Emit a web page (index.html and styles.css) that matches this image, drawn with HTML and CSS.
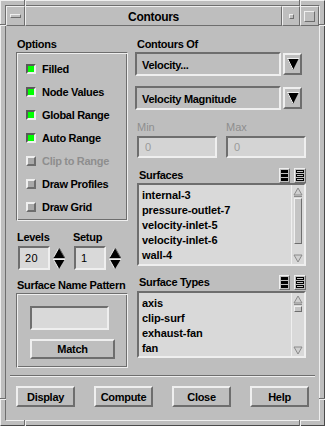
FILE: index.html
```html
<!DOCTYPE html>
<html>
<head>
<meta charset="utf-8">
<link rel="stylesheet" href="styles.css">
</head>
<body>
<div class="window">
  <span class="mark mv mtl"></span>
  <span class="mark mv mtr"></span>
  <span class="mark mv mbl"></span>
  <span class="mark mv mbr"></span>
  <span class="mark mh mlt"></span>
  <span class="mark mh mrt"></span>
  <span class="mark mh mlb"></span>
  <span class="mark mh mrb"></span>
  <div class="frame">
    <div class="titlebar">
      <div class="tbb tb-menu"><span class="menu-bar"></span></div>
      <div class="tbb title">Contours</div>
      <div class="tbb tb-min"><span class="min-sq"></span></div>
      <div class="tbb tb-max"><span class="max-sq"></span></div>
    </div>
    <div class="client">
      <div class="main">
        <div class="col-left">
          <div class="label">Options</div>
          <div class="group options">
            <div class="toggle"><span class="ind on"></span><span>Filled</span></div>
            <div class="toggle"><span class="ind on"></span><span>Node Values</span></div>
            <div class="toggle"><span class="ind on"></span><span>Global Range</span></div>
            <div class="toggle"><span class="ind on"></span><span>Auto Range</span></div>
            <div class="toggle disabled"><span class="ind"></span><span>Clip to Range</span></div>
            <div class="toggle"><span class="ind"></span><span>Draw Profiles</span></div>
            <div class="toggle"><span class="ind"></span><span>Draw Grid</span></div>
          </div>
          <div class="spinrow">
            <div class="spin spin-levels">
              <div class="label spin-label">Levels</div>
              <div class="spin-ctl">
                <div class="field spin-field">20</div>
                <div class="arrows">
                  <svg width="12" height="10" viewBox="0 0 12 10"><polygon points="6,0 12,10 0,10" fill="#000"/><line x1="5.5" y1="0.5" x2="0.5" y2="9.5" stroke="#efefef"/><line x1="6.5" y1="0.5" x2="11.5" y2="9.5" stroke="#606060"/></svg>
                  <svg width="12" height="10" viewBox="0 0 12 10"><polygon points="0,0 12,0 6,10" fill="#000"/><line x1="0" y1="0.5" x2="12" y2="0.5" stroke="#efefef"/><line x1="0.5" y1="0.5" x2="5.5" y2="9.5" stroke="#efefef"/></svg>
                </div>
              </div>
            </div>
            <div class="spin spin-setup">
              <div class="label spin-label">Setup</div>
              <div class="spin-ctl">
                <div class="field spin-field">1</div>
                <div class="arrows">
                  <svg width="12" height="10" viewBox="0 0 12 10"><polygon points="6,0 12,10 0,10" fill="#000"/><line x1="5.5" y1="0.5" x2="0.5" y2="9.5" stroke="#efefef"/><line x1="6.5" y1="0.5" x2="11.5" y2="9.5" stroke="#606060"/></svg>
                  <svg width="12" height="10" viewBox="0 0 12 10"><polygon points="0,0 12,0 6,10" fill="#000"/><line x1="0" y1="0.5" x2="12" y2="0.5" stroke="#efefef"/><line x1="0.5" y1="0.5" x2="5.5" y2="9.5" stroke="#efefef"/></svg>
                </div>
              </div>
            </div>
          </div>
          <div class="label snp-label">Surface Name Pattern</div>
          <div class="group pattern">
            <div class="field pattern-field"></div>
            <div class="btn match">Match</div>
          </div>
        </div>
        <div class="col-right">
          <div class="label rlabel">Contours Of</div>
          <div class="combo">
            <div class="combo-field">Velocity...</div>
            <div class="combo-btn"><svg width="12" height="12" viewBox="0 0 12 12"><polygon points="0,0 12,0 6,12" fill="#000"/><line x1="0" y1="0.5" x2="12" y2="0.5" stroke="#efefef"/><line x1="0.5" y1="0.5" x2="6" y2="11.5" stroke="#efefef"/></svg></div>
          </div>
          <div class="combo combo2">
            <div class="combo-field">Velocity Magnitude</div>
            <div class="combo-btn"><svg width="12" height="12" viewBox="0 0 12 12"><polygon points="0,0 12,0 6,12" fill="#000"/><line x1="0" y1="0.5" x2="12" y2="0.5" stroke="#efefef"/><line x1="0.5" y1="0.5" x2="6" y2="11.5" stroke="#efefef"/></svg></div>
          </div>
          <div class="minmax">
            <div class="mm-col">
              <div class="mm-label">Min</div>
              <div class="field mm-field">0</div>
            </div>
            <div class="mm-col">
              <div class="mm-label">Max</div>
              <div class="field mm-field">0</div>
            </div>
          </div>
          <div class="list-head">
            <span class="lh-label">Surfaces</span>
            <span class="selbtn"><svg width="7" height="11" viewBox="0 0 7 11"><rect x="0" y="0" width="7" height="3" fill="#000"/><rect x="0" y="4" width="7" height="3" fill="#000"/><rect x="0" y="8" width="7" height="3" fill="#000"/></svg></span>
            <span class="selbtn"><svg width="8" height="11" viewBox="0 0 8 11"><rect x="0.5" y="0.5" width="7" height="2" fill="none" stroke="#000"/><rect x="0.5" y="4.5" width="7" height="2" fill="none" stroke="#000"/><rect x="0.5" y="8.5" width="7" height="2" fill="none" stroke="#000"/></svg></span>
          </div>
          <div class="list list-surfaces">
            <div class="items">
              <div class="item">internal-3</div>
              <div class="item">pressure-outlet-7</div>
              <div class="item">velocity-inlet-5</div>
              <div class="item">velocity-inlet-6</div>
              <div class="item">wall-4</div>
            </div>
            <div class="sbar">
              <div class="sarrow"><svg width="10" height="10" viewBox="0 0 10 10"><polygon points="5,1 9,8 1,8" fill="#d0d0d0" stroke="#8a8a8a"/><line x1="1" y1="9.5" x2="9" y2="9.5" stroke="#8a8a8a"/></svg></div>
              <div class="trough"><div class="slider slider-big"></div></div>
              <div class="sarrow"><svg width="10" height="10" viewBox="0 0 10 10"><polygon points="1,2 9,2 5,9" fill="#d0d0d0" stroke="#8a8a8a"/></svg></div>
            </div>
          </div>
          <div class="list-head list-head2">
            <span class="lh-label">Surface Types</span>
            <span class="selbtn"><svg width="7" height="11" viewBox="0 0 7 11"><rect x="0" y="0" width="7" height="3" fill="#000"/><rect x="0" y="4" width="7" height="3" fill="#000"/><rect x="0" y="8" width="7" height="3" fill="#000"/></svg></span>
            <span class="selbtn"><svg width="8" height="11" viewBox="0 0 8 11"><rect x="0.5" y="0.5" width="7" height="2" fill="none" stroke="#000"/><rect x="0.5" y="4.5" width="7" height="2" fill="none" stroke="#000"/><rect x="0.5" y="8.5" width="7" height="2" fill="none" stroke="#000"/></svg></span>
          </div>
          <div class="list list-types">
            <div class="items">
              <div class="item">axis</div>
              <div class="item">clip-surf</div>
              <div class="item">exhaust-fan</div>
              <div class="item">fan</div>
            </div>
            <div class="sbar">
              <div class="sarrow"><svg width="10" height="10" viewBox="0 0 10 10"><polygon points="5,1 9,8 1,8" fill="#d0d0d0" stroke="#8a8a8a"/><line x1="1" y1="9.5" x2="9" y2="9.5" stroke="#8a8a8a"/></svg></div>
              <div class="trough"><div class="slider slider-small"></div></div>
              <div class="sarrow"><svg width="10" height="10" viewBox="0 0 10 10"><polygon points="1,2 9,2 5,9" fill="#d0d0d0" stroke="#8a8a8a"/></svg></div>
            </div>
          </div>
        </div>
      </div>
      <div class="sep"></div>
      <div class="buttons">
        <div class="btn act">Display</div>
        <div class="btn act">Compute</div>
        <div class="btn act">Close</div>
        <div class="btn act">Help</div>
      </div>
    </div>
  </div>
</div>
</body>
</html>
```

FILE: styles.css
```css
* { box-sizing: border-box; margin: 0; padding: 0; }
html, body { width: 325px; height: 426px; overflow: hidden; }
body {
  background: #bebebe;
  font-family: "Liberation Sans", Arial, sans-serif;
  font-size: 11px;
  font-weight: bold;
  letter-spacing: -0.3px;
  color: #000;
}
.window {
  position: relative;
  width: 325px;
  height: 426px;
  background: #bebebe;
  border: 1px solid;
  border-color: #efefef #4a4a4a #4a4a4a #efefef;
  padding: 4px;
}
.mark { position: absolute; }
.mv { width: 2px; height: 6px; border-left: 1px solid #6e6e6e; border-right: 1px solid #efefef; }
.mh { width: 6px; height: 2px; border-top: 1px solid #6e6e6e; border-bottom: 1px solid #efefef; }
.mtl { top: -1px; left: 23px; }
.mtr { top: -1px; left: 298px; }
.mbl { bottom: -1px; left: 23px; }
.mbr { bottom: -1px; left: 298px; }
.mlt { left: -1px; top: 23px; }
.mrt { right: -1px; top: 23px; }
.mlb { left: -1px; top: 397px; }
.mrb { right: -1px; top: 397px; }

.frame {
  width: 100%;
  height: 100%;
  border: 1px solid;
  border-color: #6e6e6e #efefef #efefef #6e6e6e;
  display: flex;
  flex-direction: column;
}
.titlebar { display: flex; height: 20px; flex: none; }
.tbb {
  border: 1px solid;
  border-color: #efefef #6e6e6e #6e6e6e #efefef;
  display: flex;
  align-items: center;
  justify-content: center;
}
.tb-menu { width: 19px; }
.title { flex: 1; font-size: 12px; letter-spacing: -0.3px; padding-top: 1px; }
.tb-min { width: 18px; }
.tb-max { width: 19px; }
.menu-bar {
  width: 11px; height: 4px;
  border: 1px solid; border-color: #efefef #6e6e6e #6e6e6e #efefef;
}
.min-sq {
  width: 5px; height: 5px;
  border: 1px solid; border-color: #efefef #6e6e6e #6e6e6e #efefef;
}
.max-sq {
  width: 11px; height: 11px;
  border: 1px solid; border-color: #efefef #6e6e6e #6e6e6e #efefef;
}

.client { flex: 1; display: flex; flex-direction: column; }
.main { display: flex; padding: 11px 0 0 10px; }
.col-left { width: 112px; flex: none; }
.col-right { width: 171px; flex: none; margin-left: 7px; }

.label { height: 14px; line-height: 14px; padding-left: 1px; margin-bottom: 1px; white-space: nowrap; }

.group {
  border: 1px solid;
  border-color: #6e6e6e #efefef #efefef #6e6e6e;
  box-shadow: inset 1px 1px 0 #efefef, inset -1px -1px 0 #6e6e6e;
}
.options { padding: 4px 0 2px 9px; }
.toggle { height: 23px; display: flex; align-items: center; white-space: nowrap; }
.ind {
  width: 10px; height: 10px; flex: none; margin-right: 6px;
  border: 2px solid; border-color: #efefef #6e6e6e #6e6e6e #efefef;
  background: #a9a9a9;
}
.ind.on { border-color: #5a5a5a #efefef #efefef #5a5a5a; background: #00ff00; }
.toggle.disabled { color: #8e8e8e; }

.spinrow { display: flex; margin-top: 9px; padding-left: 2px; }
.spin-levels { width: 56px; }
.spin-label { margin-left: -1px; margin-bottom: 2px; padding-left: 0; }
.spin-ctl { display: flex; align-items: center; }
.field {
  border: 2px solid;
  border-color: #6e6e6e #efefef #efefef #6e6e6e;
  background: #d9d9d9;
}
.spin-field {
  width: 32px; height: 24px;
  font-weight: normal; letter-spacing: 0.5px; font-size: 11px;
  display: flex; align-items: center; padding-left: 5px;
}
.arrows { display: flex; flex-direction: column; gap: 1px; margin-left: 3px; }
.arrows svg { display: block; }

.snp-label { margin-top: 8px; }
.pattern { height: 75px; padding: 12px 0 0 13px; }
.pattern-field { width: 79px; height: 24px; }
.btn {
  border: 2px solid;
  border-color: #efefef #6e6e6e #6e6e6e #efefef;
  display: flex; align-items: center; justify-content: center;
  white-space: nowrap;
}
.match { width: 85px; height: 20px; margin-top: 9px; }

.rlabel { padding-left: 2px; }
.combo { display: flex; align-items: center; height: 24px; }
.combo2 { margin-top: 10px; }
.combo-field {
  width: 146px; height: 24px;
  border: 2px solid; border-color: #6e6e6e #efefef #efefef #6e6e6e;
  display: flex; align-items: center; padding-left: 5px; padding-top: 1px;
  white-space: nowrap;
}
.combo-btn {
  width: 19px; height: 22px; margin-left: 2px;
  border: 2px solid; border-color: #efefef #6e6e6e #6e6e6e #efefef;
  display: flex; align-items: center; justify-content: center;
}
.combo-btn svg { display: block; }

.minmax { display: flex; margin-top: 10px; padding-left: 2px; gap: 9px; }
.mm-col { width: 80px; }
.mm-label { height: 14px; line-height: 14px; margin-bottom: 2px; color: #8e8e8e; font-weight: normal; letter-spacing: 0; }
.mm-field {
  width: 80px; height: 22px;
  background: #d4d4d4;
  color: #9a9a9a; font-weight: normal;
  display: flex; align-items: center; padding-left: 6px;
}

.list-head { display: flex; align-items: center; height: 16px; margin-top: 9px; }
.list-head2 { margin-top: 8px; }
.lh-label { flex: 1; padding-left: 4px; line-height: 16px; white-space: nowrap; }
.selbtn {
  width: 11px; height: 15px;
  border: 1px solid; border-color: #efefef #6e6e6e #6e6e6e #efefef;
  display: flex; align-items: center; justify-content: center;
  margin-left: 4px;
}
.selbtn + .selbtn { width: 12px; }
.selbtn svg { display: block; }

.list {
  margin-top: 1px; margin-left: 2px;
  width: 169px;
  border: 2px solid; border-color: #6e6e6e #efefef #efefef #6e6e6e;
  background: #d9d9d9;
  display: flex;
}
.list-surfaces { height: 83px; margin-top: 0; }
.list-types { height: 67px; }
.items { flex: 1; padding: 3px 0 0 3px; letter-spacing: -0.1px; }
.item { height: 15px; line-height: 15px; white-space: nowrap; }
.sbar {
  width: 13px; flex: none;
  border-left: 1px solid #efefef;
  display: flex; flex-direction: column;
  padding: 1px 1px 1px 1px;
}
.sarrow { height: 11px; display: flex; align-items: center; justify-content: center; flex: none; }
.sarrow svg { display: block; }
.trough { flex: 1; padding: 1px 1px 0 1px; }
.slider {
  border: 1px solid; border-color: #efefef #6e6e6e #6e6e6e #efefef;
  background: #c4c4c4;
}
.slider-big { height: 46px; }
.slider-small { height: 6px; }

.sep {
  margin: 7px 4px 0 4px;
  height: 2px;
  border-top: 1px solid #6e6e6e;
  border-bottom: 1px solid #efefef;
}
.buttons { display: flex; gap: 19px; padding-left: 10px; margin-top: 9px; }
.act { width: 59px; height: 21px; }
```
